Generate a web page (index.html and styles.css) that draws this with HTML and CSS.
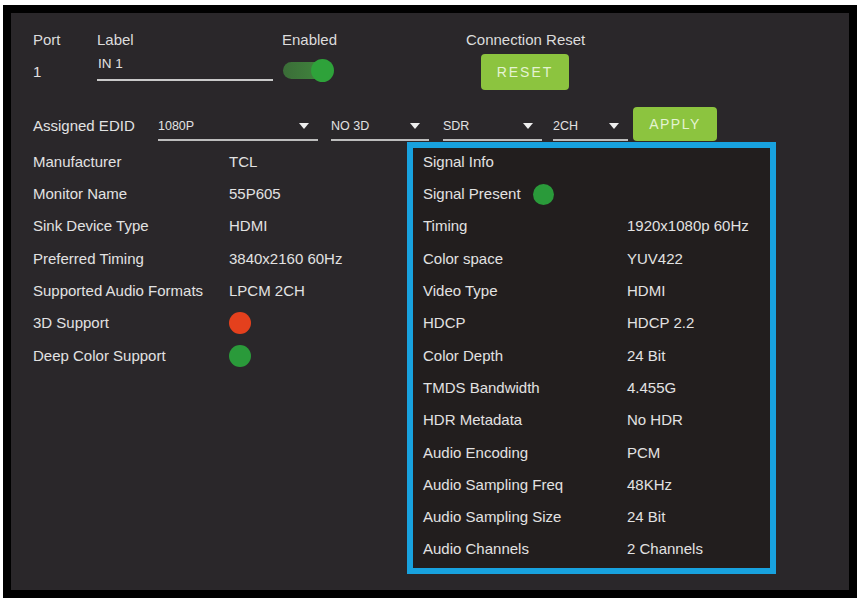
FILE: index.html
```html
<!DOCTYPE html>
<html lang="en">
<head>
    <meta charset="UTF-8">
    <meta name="viewport" content="width=device-width, initial-scale=1.0">
    <title>Port 1 - EDID / Signal Info</title>
    <link rel="stylesheet" href="styles.css">
</head>
<body>
    <div class="frame">
        <div class="panel">
            <!-- port header -->
            <div class="top">
                <div class="col col-port">
                    <span class="head">Port</span>
                    <span class="port-num">1</span>
                </div>
                <div class="col col-label">
                    <span class="head">Label</span>
                    <div class="text-input">IN 1</div>
                </div>
                <div class="col col-enabled">
                    <span class="head">Enabled</span>
                    <div class="toggle"><span class="knob"></span></div>
                </div>
                <div class="col col-reset">
                    <span class="head">Connection Reset</span>
                    <button class="btn btn-reset">RESET</button>
                </div>
            </div>

            <!-- EDID selection -->
            <div class="edid">
                <span class="edid-label">Assigned EDID</span>
                <div class="select sel-res"><span>1080P</span><i class="caret"></i></div>
                <div class="select sel-3d"><span>NO 3D</span><i class="caret"></i></div>
                <div class="select sel-hdr"><span>SDR</span><i class="caret"></i></div>
                <div class="select sel-ch"><span>2CH</span><i class="caret"></i></div>
                <button class="btn btn-apply">APPLY</button>
            </div>

            <div class="info">
                <div class="sink">
                    <div class="row"><span class="key">Manufacturer</span><span>TCL</span></div>
                    <div class="row"><span class="key">Monitor Name</span><span>55P605</span></div>
                    <div class="row"><span class="key">Sink Device Type</span><span>HDMI</span></div>
                    <div class="row"><span class="key">Preferred Timing</span><span>3840x2160 60Hz</span></div>
                    <div class="row"><span class="key">Supported Audio Formats</span><span>LPCM 2CH</span></div>
                    <div class="row"><span class="key">3D Support</span><span class="dot red"></span></div>
                    <div class="row"><span class="key">Deep Color Support</span><span class="dot green"></span></div>
                </div>

                <div class="signal">
                    <div class="row"><span>Signal Info</span></div>
                    <div class="row"><span>Signal Present</span><span class="dot green small"></span></div>
                    <div class="row"><span class="key">Timing</span><span>1920x1080p 60Hz</span></div>
                    <div class="row"><span class="key">Color space</span><span>YUV422</span></div>
                    <div class="row"><span class="key">Video Type</span><span>HDMI</span></div>
                    <div class="row"><span class="key">HDCP</span><span>HDCP 2.2</span></div>
                    <div class="row"><span class="key">Color Depth</span><span>24 Bit</span></div>
                    <div class="row"><span class="key">TMDS Bandwidth</span><span>4.455G</span></div>
                    <div class="row"><span class="key">HDR Metadata</span><span>No HDR</span></div>
                    <div class="row"><span class="key">Audio Encoding</span><span>PCM</span></div>
                    <div class="row"><span class="key">Audio Sampling Freq</span><span>48KHz</span></div>
                    <div class="row"><span class="key">Audio Sampling Size</span><span>24 Bit</span></div>
                    <div class="row"><span class="key">Audio Channels</span><span>2 Channels</span></div>
                </div>
            </div>
        </div>
    </div>
</body>
</html>
```

FILE: styles.css
```css
html, body {
    height: 100%;
}

body {
    margin: 0;
    background-color: #fff;
    font-family: "Liberation Sans", Arial, sans-serif;
    font-size: 15px;
    color: #e2e2e2;
    overflow: hidden;
}

.frame {
    margin: 5px 0 0 3px;
    width: 870px;
    height: 610px;
    box-sizing: border-box;
    padding: 8px;
    background-color: #000;
}

.panel {
    width: 838px;
    height: 577px;
    box-sizing: border-box;
    padding: 19px 0 0 22px;
    background-color: #2a272a;
}

/* header row */
.top {
    display: flex;
}

.col {
    display: flex;
    flex-direction: column;
    align-items: flex-start;
}

.head {
    line-height: 16px;
    color: #dcdcdc;
}

.col-port { width: 64px; }
.col-label { width: 185px; }
.col-enabled { width: 184px; }

.port-num {
    margin-top: 16px;
    line-height: 16px;
}

.text-input {
    width: 176px;
    margin-top: 8px;
    padding: 0 0 7px 1px;
    box-sizing: border-box;
    line-height: 16px;
    font-size: 13.5px;
    border-bottom: 2px solid #c9c9c9;
}

.toggle {
    position: relative;
    margin-top: 14px;
    width: 40px;
    height: 17px;
    border-radius: 9px;
    background: linear-gradient(to right, #3b6d38, #40853d);
    margin-left: 1px;
}

.knob {
    position: absolute;
    right: -11px;
    top: -3px;
    width: 23px;
    height: 23px;
    border-radius: 50%;
    background-color: #2ea23a;
}

.btn {
    border: none;
    border-radius: 4px;
    background-color: #8cc43f;
    color: #e4f3d2;
    font-family: "Liberation Sans", Arial, sans-serif;
    font-size: 14px;
    letter-spacing: 2px;
    padding: 0;
}

.btn-reset {
    margin: 6px 0 0 15px;
    width: 88px;
    height: 36px;
}

/* EDID row */
.edid {
    display: flex;
    align-items: flex-end;
    margin-top: 17px;
    height: 34px;
}

.edid-label {
    width: 125px;
    line-height: 16px;
    padding-bottom: 7px;
}

.select {
    display: flex;
    align-items: center;
    justify-content: space-between;
    height: 34px;
    box-sizing: border-box;
    padding: 12px 9px 6px 0;
    font-size: 12.5px;
    border-bottom: 2px solid #bdbdbd;
}

.sel-res { width: 160px; margin-right: 13px; }
.sel-3d { width: 98px; margin-right: 14px; }
.sel-hdr { width: 99px; margin-right: 11px; }
.sel-ch { width: 75px; margin-right: 5px; }

.caret {
    width: 0;
    height: 0;
    border-left: 5px solid transparent;
    border-right: 5px solid transparent;
    border-top: 6px solid #eee;
}

.btn-apply {
    width: 84px;
    height: 34px;
    letter-spacing: 1.5px;
}

/* info tables */
.info {
    display: flex;
    margin-top: 1px;
}

.sink {
    width: 374px;
    padding-top: 6px;
}

.signal {
    width: 369px;
    height: 432px;
    box-sizing: border-box;
    border: 6px solid #18a2df;
    padding: 0 10px;
    background-color: #221e1e;
}

.row {
    display: flex;
    align-items: center;
    height: 32.3px;
    box-sizing: border-box;
    padding-bottom: 4.6px;
    line-height: 16px;
}

.sink .key { width: 196px; }
.signal .key { width: 204px; }

.dot {
    display: inline-block;
    width: 22px;
    height: 22px;
    border-radius: 50%;
}

.dot.red { background-color: #e4401d; }
.dot.green { background-color: #2a9a3a; }

.dot.small {
    width: 21px;
    height: 21px;
    margin-left: 12px;
}
```
